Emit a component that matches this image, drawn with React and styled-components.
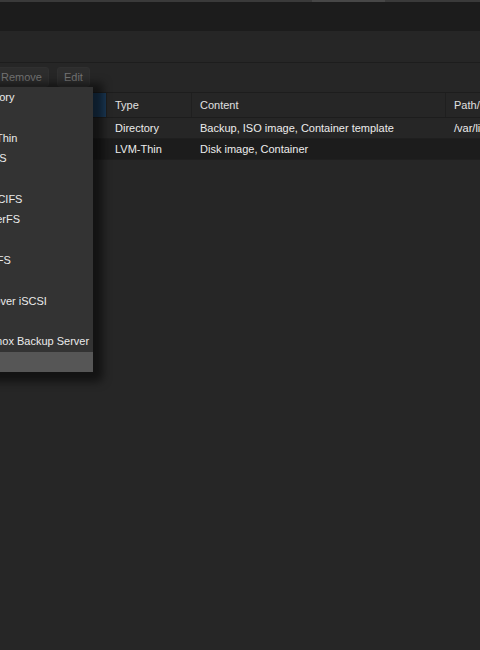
import React from "react";
import styled, { createGlobalStyle } from "styled-components";

const GlobalStyle = createGlobalStyle`
  html, body {
    margin: 0;
    padding: 0;
    background: #262626;
    font-family: "Liberation Sans", Arial, sans-serif;
    font-size: 11px;
    color: #e6e6e6;
  }
`;

const storageTypes = [
  "Directory",
  "LVM",
  "LVM-Thin",
  "BTRFS",
  "NFS",
  "SMB/CIFS",
  "GlusterFS",
  "iSCSI",
  "CephFS",
  "RBD",
  "ZFS over iSCSI",
  "ZFS",
  "Proxmox Backup Server",
  "ESXi",
];

const rows = [
  { id: "local", type: "Directory", content: "Backup, ISO image, Container template", path: "/var/lib/vz", dark: false },
  { id: "local-lvm", type: "LVM-Thin", content: "Disk image, Container", path: "", dark: true },
];

export default function App() {
  return (
    <Page>
      <GlobalStyle />
      <TopStrip>
        <StripTab />
      </TopStrip>
      <Header />
      <PanelTitle />
      <Toolbar>
        <ToolButton $hidden />
        <ToolButton>Remove</ToolButton>
        <ToolButton>Edit</ToolButton>
      </Toolbar>
      <Grid>
        <HeadCell $sorted />
        <HeadCell>Type</HeadCell>
        <HeadCell>Content</HeadCell>
        <HeadCell $last>Path/Target</HeadCell>
        {rows.map((r) => (
          <React.Fragment key={r.id}>
            <Cell $dark={r.dark} />
            <Cell $dark={r.dark}>{r.type}</Cell>
            <Cell $dark={r.dark}>{r.content}</Cell>
            <Cell $dark={r.dark}>{r.path}</Cell>
          </React.Fragment>
        ))}
      </Grid>
      <Menu>
        {storageTypes.map((t, i) => (
          <MenuItem key={t} $active={i === storageTypes.length - 1}>
            {t}
          </MenuItem>
        ))}
      </Menu>
    </Page>
  );
}

const Page = styled.div`
  position: relative;
  width: 480px;
  height: 650px;
  overflow: hidden;
  background: #262626;
`;

const TopStrip = styled.div`
  height: 2px;
  background: #3a3a3a;
  display: flex;
`;

const StripTab = styled.div`
  margin-left: 312px;
  width: 73px;
  background: #474747;
`;

const Header = styled.div`
  height: 29px;
  background: #1c1c1c;
`;

const PanelTitle = styled.div`
  height: 31px;
  background: #262626;
  border-bottom: 1px solid #1d1d1d;
`;

const Toolbar = styled.div`
  height: 29px;
  box-sizing: border-box;
  padding-top: 4px;
  margin-left: -70px;
  display: flex;
  align-items: flex-start;
  gap: 8px;
`;

const ToolButton = styled.div`
  height: 20px;
  box-sizing: border-box;
  padding: 0 6px;
  display: flex;
  align-items: center;
  justify-content: center;
  min-width: 32px;
  width: ${(p) => (p.$hidden ? "56px" : "auto")};
  background: #2d2d2d;
  border: 1px solid #303030;
  border-radius: 3px;
  color: #747474;
  font-size: 11px;
`;

const Grid = styled.div`
  display: grid;
  grid-template-columns: 107px 85px 254px 1fr;
  border-top: 1px solid #1d1d1d;
`;

const HeadCell = styled.div`
  height: 25px;
  box-sizing: border-box;
  display: flex;
  align-items: center;
  padding-left: 8px;
  white-space: nowrap;
  overflow: hidden;
  color: #e0e0e0;
  background: ${(p) => (p.$sorted ? "#1a3855" : "#262626")};
  border-right: ${(p) => (p.$last ? "none" : "1px solid #1f1f1f")};
  border-bottom: 1px solid #1d1d1d;
`;

const Cell = styled.div`
  height: 21px;
  box-sizing: border-box;
  display: flex;
  align-items: center;
  padding-left: 8px;
  white-space: nowrap;
  overflow: hidden;
  color: #ececec;
  background: ${(p) => (p.$dark ? "#1c1c1c" : "#262626")};
  border-bottom: 1px solid #1f1f1f;
`;

const Menu = styled.div`
  position: absolute;
  left: -60px;
  top: 87px;
  width: 153px;
  background: #333333;
  box-shadow: 3px 3px 9px 7px rgba(0, 0, 0, 0.5);
  border-radius: 0 0 2px 0;
`;

const MenuItem = styled.div`
  height: 20.36px;
  display: flex;
  align-items: center;
  padding-left: 30.5px;
  white-space: nowrap;
  color: #ebebeb;
  background: ${(p) => (p.$active ? "#565656" : "transparent")};
`;
